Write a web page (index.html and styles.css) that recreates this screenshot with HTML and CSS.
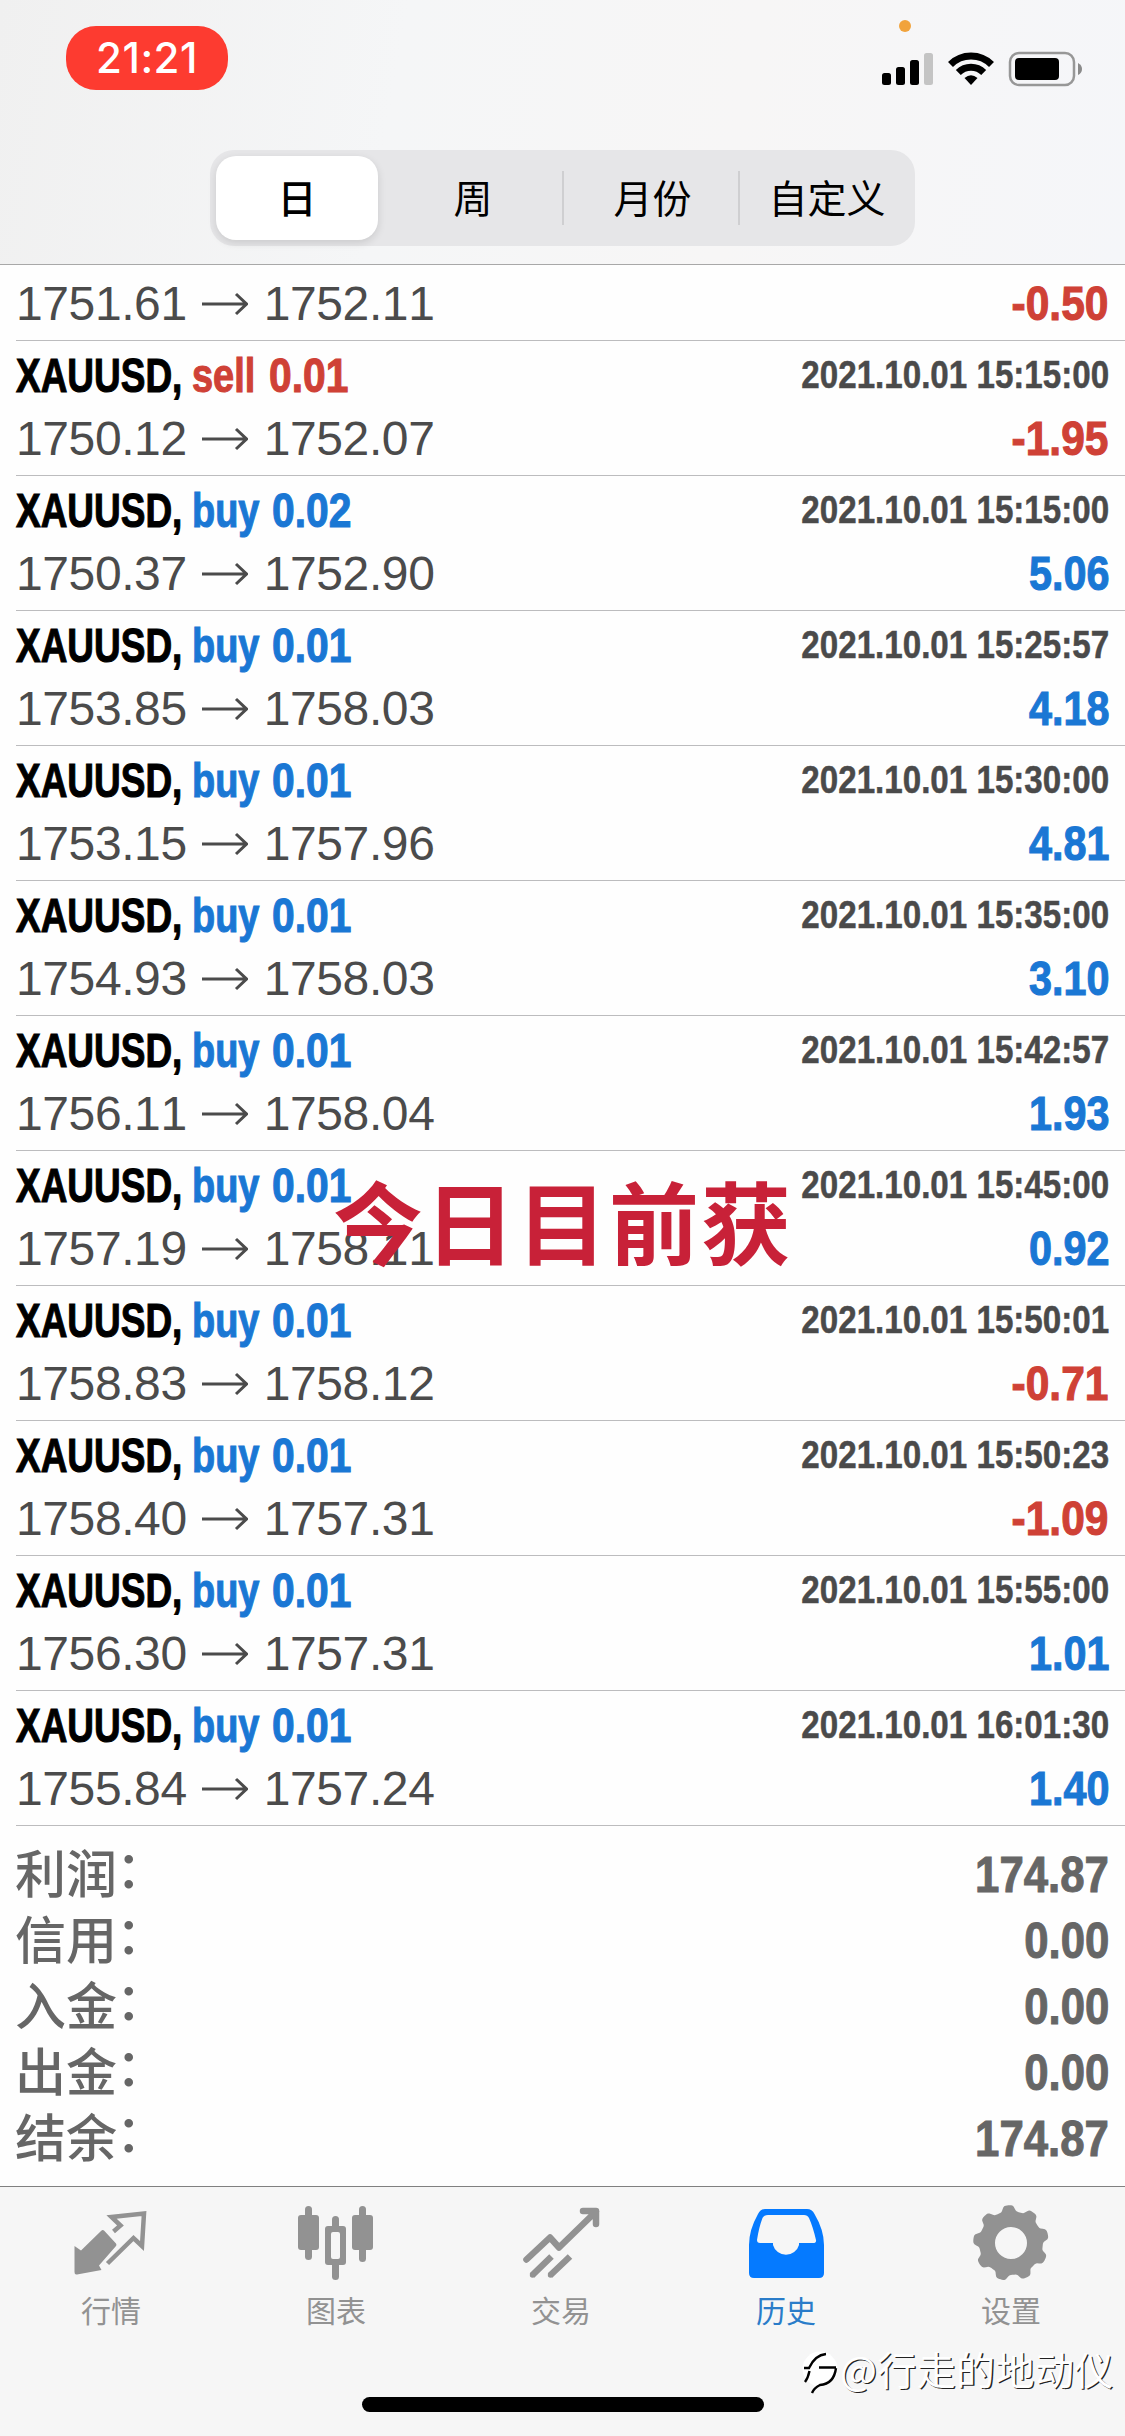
FILE: index.html
```html
<!DOCTYPE html>
<html lang="zh-CN">
<head>
<meta charset="utf-8">
<title>历史</title>
<link rel="stylesheet" href="styles.css">
</head>
<body>
<div class="screen">
  <header class="header">
    <div class="status">
      <div class="clock"><span>21:21</span></div>
      <i class="mic-dot"></i>
      <svg class="status-icons" width="204" height="40" viewBox="880 49 204 40">
        <rect x="882" y="73" width="9" height="12" rx="2.5"/>
        <rect x="896" y="67" width="9" height="18" rx="2.5"/>
        <rect x="910" y="60" width="9" height="25" rx="2.5"/>
        <rect x="924" y="53" width="9" height="32" rx="2.5" fill="#c4c4c4"/>
        <g fill="none" stroke="#000" stroke-width="7">
          <path d="M950.5 64.5a29 29 0 0 1 41 0"/>
          <path d="M958.3 72.5a18 18 0 0 1 25.4 0"/>
        </g>
        <path d="M971 85l-6.500-7q6.500-5.500 13 0z"/>
        <rect x="1010" y="53" width="64" height="32" rx="9" fill="none" stroke="#979797" stroke-width="2.500"/>
        <rect x="1015" y="58" width="44" height="22" rx="4"/>
        <path d="M1078 63q4 2 4 6t-4 6z" fill="#8a8a8a"/>
      </svg>
    </div>
    <nav class="segments">
      <span class="segment selected">日</span><span class="segment">周</span><span class="segment ruled">月份</span><span class="segment ruled">自定义</span>
    </nav>
  </header>

  <main class="history" id="history"></main>

  <section class="summary">
    <div class="total"><span>利润<i>：</i></span><b>174.87</b></div>
    <div class="total"><span>信用<i>：</i></span><b>0.00</b></div>
    <div class="total"><span>入金<i>：</i></span><b>0.00</b></div>
    <div class="total"><span>出金<i>：</i></span><b>0.00</b></div>
    <div class="total"><span>结余<i>：</i></span><b>174.87</b></div>
  </section>

  <footer class="tabs">
    <div class="tab">
      <svg width="84" height="84" viewBox="70 2201 84 84">
        <path d="M105 2230.500L117 2243.500Q118 2245 117 2246L100 2265.500L102.500 2270L78 2274.500Q75.500 2275 75.500 2272V2246L82 2250.500L102 2231Q103.500 2229.500 105 2230.500z"/>
        <path d="M114.500 2231.500L121.500 2225.500L112.500 2217L145 2213.500L143 2246L134.500 2238L108.500 2263.500" fill="none" stroke="#929292" stroke-width="4.500"/>
      </svg>
      <span>行情</span>
    </div>
    <div class="tab">
      <svg width="84" height="84" viewBox="295 2201 84 84">
        <rect x="299" y="2215" width="21" height="35" rx="3"/><rect x="306" y="2206" width="7" height="54" rx="3.500"/>
        <rect x="353" y="2215" width="21" height="35" rx="3"/><rect x="360" y="2206" width="7" height="56" rx="3.500"/>
        <rect x="333" y="2216" width="7" height="64" rx="3.500"/><rect x="326" y="2226" width="21" height="39" rx="3"/>
        <rect x="332" y="2232" width="9" height="27" rx="2" fill="#f6f6f6"/>
      </svg>
      <span>图表</span>
    </div>
    <div class="tab">
      <svg width="84" height="84" viewBox="519 2201 84 84" class="strokes">
        <path d="M526.500 2259.500L550 2237.500L559 2247.500L596 2211.500M583 2211H596V2224" stroke-linecap="round" stroke-linejoin="round"/>
        <path d="M532 2275.500l2-2L551.500 2256.500M550 2275.500L570 2256.500"/>
        <circle cx="532.500" cy="2275" r="2.700"/><circle cx="550.500" cy="2275" r="2.700"/>
      </svg>
      <span>交易</span>
    </div>
    <div class="tab active">
      <svg width="84" height="84" viewBox="744 2201 84 84">
        <path fill-rule="evenodd" d="M765 2209H807Q812 2209 814.500 2214Q824 2230 824 2245V2273Q824 2278 819 2278H754Q749 2278 749 2273V2245Q749 2230 758 2214Q760.500 2209 765 2209zM768 2215Q764 2215 762.500 2218Q759 2227 757 2240Q757 2243 760 2243H773V2245A13.500 13.500 0 0 0 799 2245V2243H813Q816.500 2243 816 2240Q813 2227 809 2218Q807.500 2215 804 2215z"/>
      </svg>
      <span>历史</span>
    </div>
    <div class="tab">
      <svg width="84" height="84" viewBox="-42 -42 84 84">
        <path id="gear-body" fill-rule="evenodd"/>
      </svg>
      <span>设置</span>
    </div>
  </footer>

  <div class="home-bar"></div>
  <div class="caption">今日目前获</div>
  <div class="author">
    <svg width="38" height="46" viewBox="0 0 38 46">
      <circle cx="20" cy="21" r="17.500" fill="#fff"/>
      <path d="M4 20h5q6-13 17-14M19 19.500h17M5 34q3-4 4.500-11M36 20q-2 16-16 17q-6 3-8 8" fill="none" stroke="#000" stroke-width="2.400"/>
    </svg>
    <span>@行走的地动仪</span>
  </div>
</div>
<script src="app.js"></script>
</body>
</html>
```
FILE: styles.css
```css
* { box-sizing: border-box; }
body { margin: 0; background: #fff; }
.screen {
  position: relative;
  width: 1125px;
  height: 2436px;
  overflow: hidden;
  display: flex;
  flex-direction: column;
  background: #fefefe;
  font-family: "Liberation Sans", "Noto Sans CJK SC", sans-serif;
}
.header {
  height: 265px;
  flex: none;
  border-bottom: 1px solid #a8a8a8;
  background: linear-gradient(100deg, #f0f0f0 0%, #f5f6f7 35%, #f7f6f6 65%, #f5f6f9 100%);
}
.status {
  position: relative;
  height: 150px;
  display: flex;
  justify-content: space-between;
  padding: 26px 41px 0 66px;
}
.clock {
  width: 162px;
  height: 64px;
  border-radius: 30px;
  background: #fd3b30;
  color: #fff;
  font: 500 42px/64px "Inter", sans-serif;
  text-align: center;
  letter-spacing: .5px;
}
.mic-dot {
  position: absolute;
  left: 899px;
  top: 20px;
  width: 12px;
  height: 12px;
  border-radius: 50%;
  background: #f1a33c;
}
.status-icons { margin-top: 23px; }
.segments {
  width: 705px;
  height: 96px;
  margin-left: 210px;
  padding: 6px;
  border-radius: 24px;
  background: #e6e6e8;
  display: grid;
  grid-template-columns: 162px 190px 169px 172px;
}
.segment {
  position: relative;
  display: flex;
  align-items: center;
  justify-content: center;
  padding-bottom: 4px;
  font: 400 39px/80px "Noto Sans CJK SC", sans-serif;
  color: #000;
}
.segment:last-child { padding-left: 8px; }
.selected {
  border-radius: 20px;
  background: #fff;
  font-weight: 500;
  box-shadow: 0 3px 8px rgba(0, 0, 0, .12);
}
.ruled::before {
  content: "";
  position: absolute;
  left: -6px;
  top: 15px;
  width: 2px;
  height: 54px;
  background: #cfcfd1;
}
.ruled:last-child::before { left: 1px; }
.history { height: 1562px; flex: none; padding-left: 16px; }
.deal {
  height: 135px;
  padding: 3px 16px 0 0;
  border-bottom: 1px solid #bcbcbe;
}
.deal.cut { height: 76px; padding-top: 7px; }
.line {
  display: flex;
  justify-content: space-between;
  height: 63px;
  line-height: 63px;
  font-size: 48px;
  font-kerning: none;
  white-space: nowrap;
}
.title { display: flex; font-weight: bold; -webkit-text-stroke: 1.1px; }
.title span { transform-origin: 0 50%; }
.symbol { width: 176px; color: #000; transform: scaleX(.77); }
.side { width: 80px; transform: scaleX(.79); }
.sell .side { width: 77px; }
.volume { width: 80px; transform: scaleX(.85); }
.buy { color: #1a77d4; }
.sell { color: #cf4136; }
.date {
  font-size: 39px;
  font-weight: bold;
  line-height: 61px;
  color: #4a4a4a;
  -webkit-text-stroke: .5px;
  transform: scaleX(.85);
  transform-origin: 100% 50%;
}
.prices { display: flex; color: #4b4b4b; letter-spacing: -.4px; }
.arrow { width: 46px; height: 24px; margin: 20px 16px 0 15px; fill: none; stroke: #4b4b4b; stroke-width: 3; }
.profit { font-weight: bold; -webkit-text-stroke: 1.1px; transform: scaleX(.86); transform-origin: 100% 50%; }
.profit.sell { transform: scaleX(.885); margin-right: 1px; }
.summary { height: 359px; flex: none; padding: 14px 16px 0; color: #666; }
.total {
  height: 66px;
  display: flex;
  justify-content: space-between;
  font: 500 51px/60px "Noto Sans CJK SC", sans-serif;
}
.total span { margin-left: -1px; }
.total i { display: inline-block; font-style: normal; transform: translate(-1px, -5px); }
.total b {
  font: bold 50px/68px "Liberation Sans", sans-serif;
  -webkit-text-stroke: 1px;
  font-kerning: none;
  transform: scaleX(.875);
  transform-origin: 100% 50%;
}
.tabs {
  height: 250px;
  flex: none;
  display: grid;
  grid-template-columns: repeat(5, 225px);
  border-top: 1px solid #808080;
  background: #f6f6f6;
}
.tab {
  display: flex;
  flex-direction: column;
  align-items: center;
  padding: 14px 3px 0 0;
  color: #929292;
  fill: #929292;
  font: 400 30px/40px "Noto Sans CJK SC", sans-serif;
}
.tab svg { flex: none; margin-bottom: 4px; }
.strokes { stroke: #929292; stroke-width: 6.5; }
.strokes path { fill: none; }
.strokes circle { stroke: none; }
.active { color: #2a7cc9; fill: #057aff; }
.home-bar {
  position: absolute;
  left: 362px;
  top: 2397px;
  width: 402px;
  height: 15px;
  border-radius: 8px;
  background: #000;
}
.caption {
  position: absolute;
  left: 333px;
  top: 1161px;
  font: 700 90px/116px "Noto Sans CJK SC", sans-serif;
  letter-spacing: 2px;
  color: #c82138;
  white-space: nowrap;
}
.author {
  position: absolute;
  left: 800px;
  top: 2342px;
  display: flex;
  gap: 2px;
  align-items: center;
  white-space: nowrap;
  color: #fff;
  font: 400 39px/52px "Noto Sans CJK SC", sans-serif;
  letter-spacing: .4px;
  text-shadow: 1.3px 1.3px .5px #222;
}
.author svg { margin-top: 6px; }
```
FILE: app.js
```js
const deals = [
  [null, null, null, '1751.61', '1752.11', '-0.50'],
  ['sell', '0.01', '15:15:00', '1750.12', '1752.07', '-1.95'],
  ['buy', '0.02', '15:15:00', '1750.37', '1752.90', '5.06'],
  ['buy', '0.01', '15:25:57', '1753.85', '1758.03', '4.18'],
  ['buy', '0.01', '15:30:00', '1753.15', '1757.96', '4.81'],
  ['buy', '0.01', '15:35:00', '1754.93', '1758.03', '3.10'],
  ['buy', '0.01', '15:42:57', '1756.11', '1758.04', '1.93'],
  ['buy', '0.01', '15:45:00', '1757.19', '1758.11', '0.92'],
  ['buy', '0.01', '15:50:01', '1758.83', '1758.12', '-0.71'],
  ['buy', '0.01', '15:50:23', '1758.40', '1757.31', '-1.09'],
  ['buy', '0.01', '15:55:00', '1756.30', '1757.31', '1.01'],
  ['buy', '0.01', '16:01:30', '1755.84', '1757.24', '1.40'],
];
const arrow = '<svg class="arrow" viewBox="0 0 46 24"><path d="M0 12H44M34 2L44.500 12L34 22"/></svg>';
document.getElementById('history').innerHTML = deals.map(([side, volume, time, open, close, profit]) => `
  <div class="deal ${side ? '' : 'cut'}">
    ${side ? `<div class="line"><div class="title ${side}"><span class="symbol">XAUUSD,</span><span class="side">${side}</span><span class="volume">${volume}</span></div><span class="date">2021.10.01 ${time}</span></div>` : ''}
    <div class="line"><div class="prices"><span>${open}</span>${arrow}<span>${close}</span></div><span class="profit ${profit[0] === '-' ? 'sell' : 'buy'}">${profit}</span></div>
  </div>`).join('');

// Gear outline: nine rounded teeth around a round hole.
let d = '';
for (let i = 0; i <= 360; i += 2) {
  const wave = Math.cos((i + 94) * 9 * Math.PI / 180);
  const r = 34.8 + 3 * Math.tanh(wave * 2.2) / Math.tanh(2.2);
  const a = i * Math.PI / 180;
  d += (i ? 'L' : 'M') + (r * Math.cos(a)).toFixed(2) + ' ' + (r * Math.sin(a)).toFixed(2);
}
document.getElementById('gear-body').setAttribute('d', d + 'zM16 0A16 16 0 1 0 -16 0A16 16 0 1 0 16 0z');
```
